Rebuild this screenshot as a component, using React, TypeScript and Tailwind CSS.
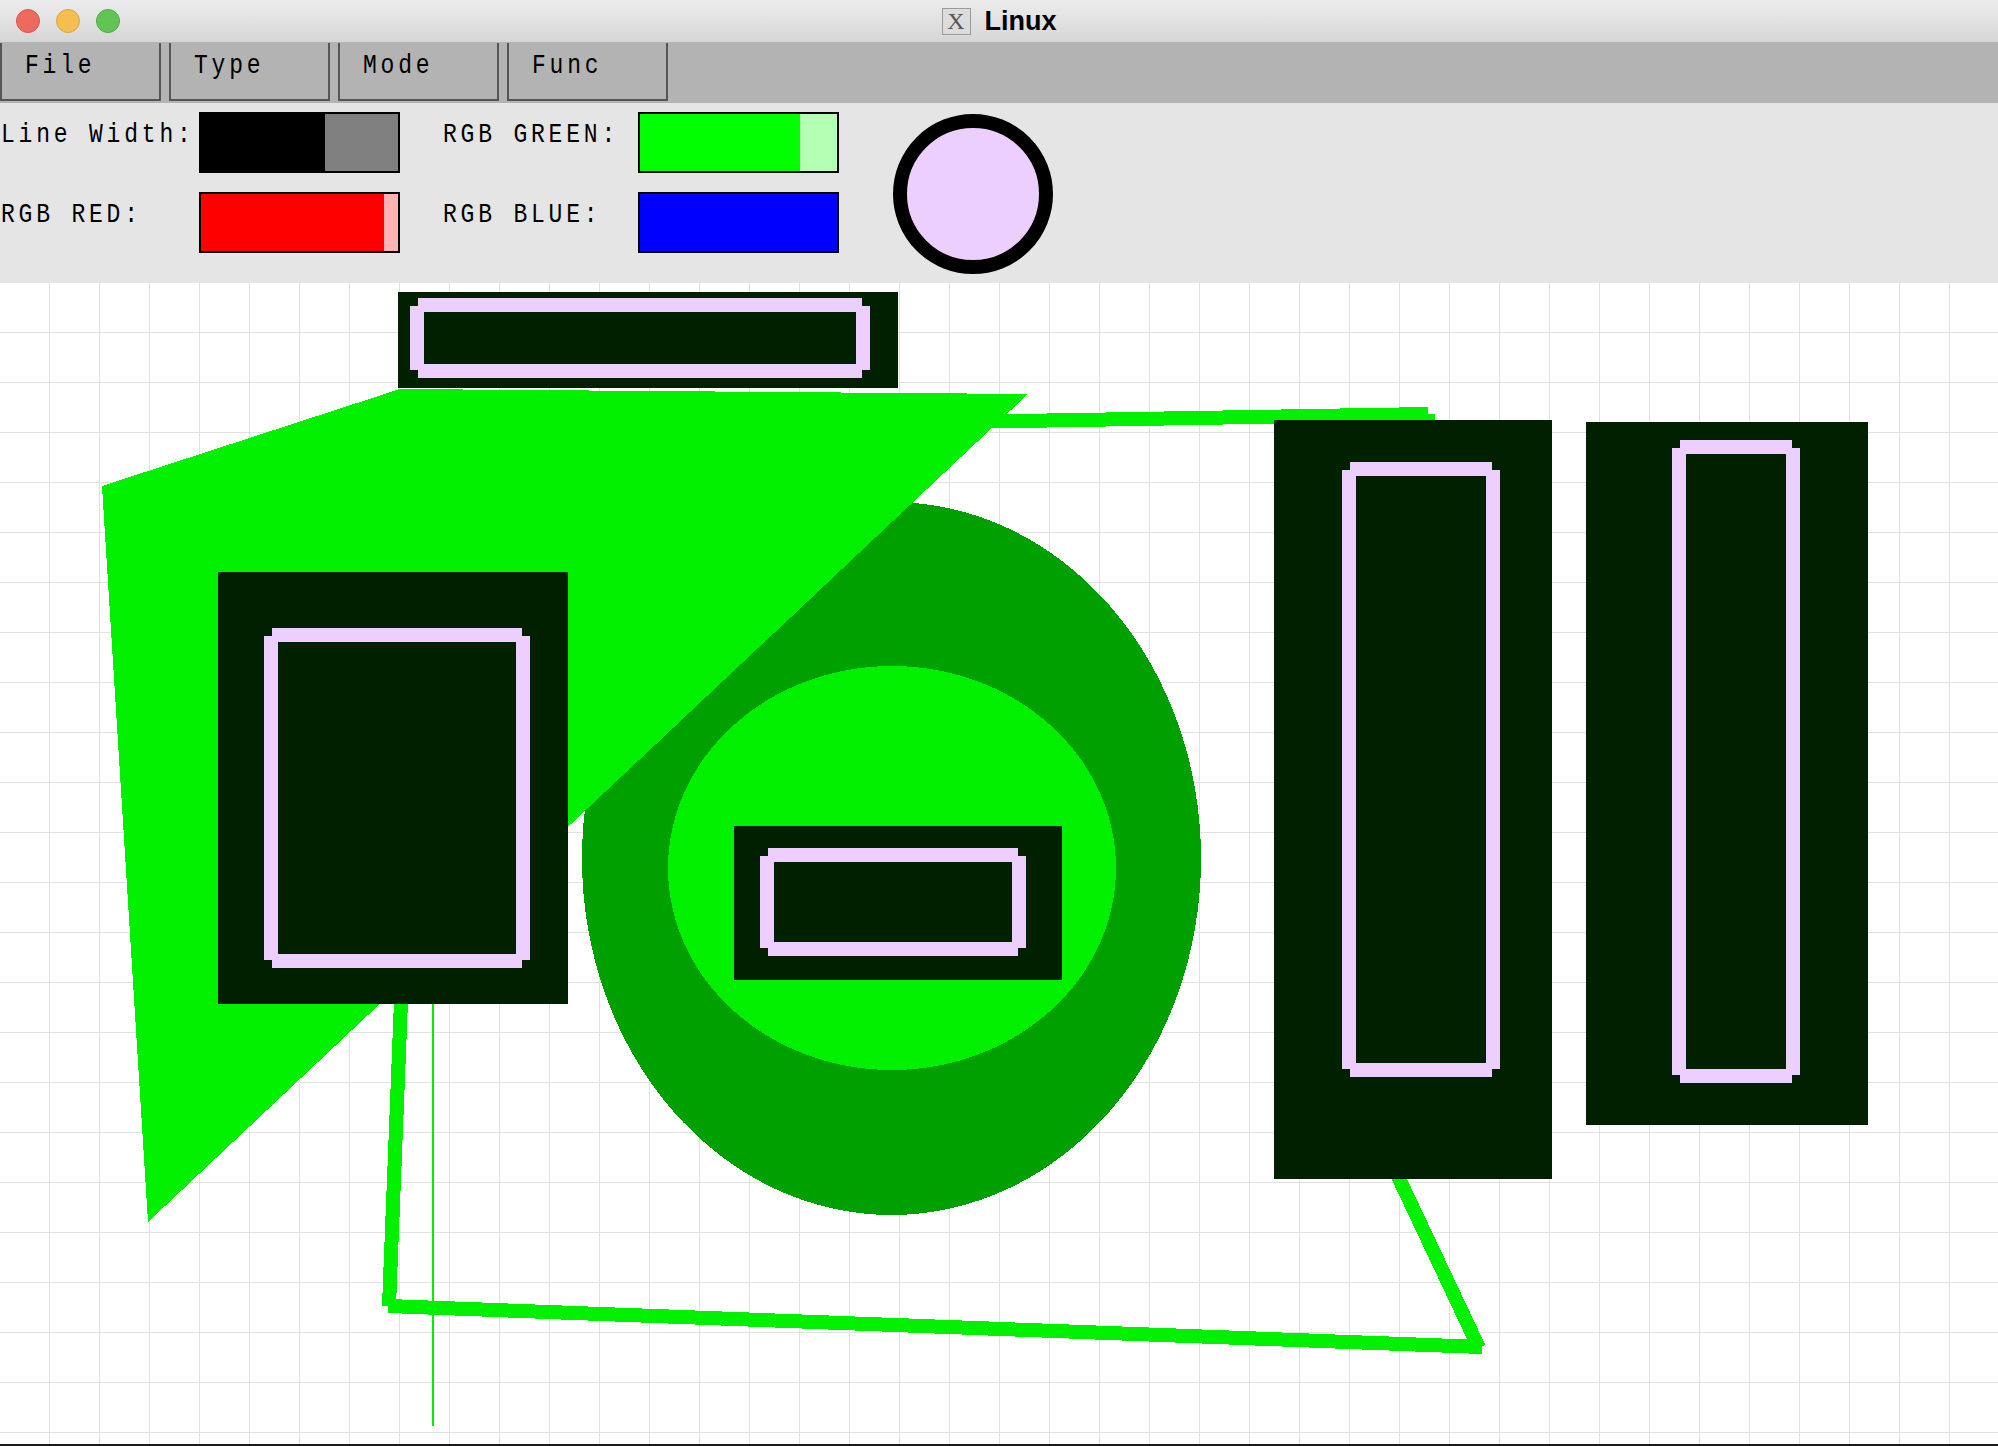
const LAV = "#edcfff";
const DARK = "#002000";
const GREEN = "#00f000";
const GREEN_DARK = "#00a000";

type Box = { x: number; y: number; w: number; h: number };

// lavender outline with the chipped corners that the X server draws
function LavFrame({ x, y, w, h }: Box) {
  const n = 8;
  const t = 14;
  const outer = `M${x + n} ${y}H${x + w - n}V${y + n}H${x + w}V${y + h - n}H${x + w - n}V${y + h}H${x + n}V${y + h - n}H${x}V${y + n}H${x + n}Z`;
  const inner = `M${x + t} ${y + t}V${y + h - t}H${x + w - t}V${y + t}Z`;
  return <path d={outer + inner} fill={LAV} fillRule="evenodd" />;
}

function Block({ outer, lav }: { outer: Box; lav: Box }) {
  return (
    <g>
      <rect x={outer.x} y={outer.y} width={outer.w} height={outer.h} fill={DARK} />
      <LavFrame {...lav} />
    </g>
  );
}

const blocks: { outer: Box; lav: Box }[] = [
  { outer: { x: 398, y: 292, w: 500, h: 96 }, lav: { x: 410, y: 298, w: 460, h: 80 } },
  { outer: { x: 218, y: 572, w: 350, h: 432 }, lav: { x: 264, y: 628, w: 266, h: 340 } },
  { outer: { x: 734, y: 826, w: 328, h: 154 }, lav: { x: 760, y: 848, w: 266, h: 108 } },
  { outer: { x: 1274, y: 420, w: 278, h: 759 }, lav: { x: 1342, y: 462, w: 158, h: 615 } },
  { outer: { x: 1586, y: 422, w: 282, h: 703 }, lav: { x: 1672, y: 440, w: 128, h: 643 } },
];

function Slider({ fill, rest, pct }: { fill: string; rest: string; pct: number }) {
  return (
    <div className="w-[201px] h-[61px] border-2 border-black flex">
      <div className="h-full" style={{ width: `${pct}%`, background: fill }} />
      <div className="h-full flex-1" style={{ background: rest }} />
    </div>
  );
}

// X "fixed" look: narrow glyphs, wide pitch, a bit taller
function Fixed({ children }: { children: React.ReactNode }) {
  return (
    <div className="origin-bottom scale-y-[1.22] leading-[27px] text-[23px] tracking-[3.8px] text-black whitespace-pre font-['Liberation_Mono',monospace]">
      {children}
    </div>
  );
}

function Label({ children }: { children: React.ReactNode }) {
  return (
    <div className="pt-[13px]">
      <Fixed>{children}</Fixed>
    </div>
  );
}

function Canvas() {
  return (
    <svg width="1998" height="1161" viewBox="0 283 1998 1161" shapeRendering="crispEdges" className="block">
      <defs>
        <pattern id="grid" x="0" y="283" width="50" height="50" patternUnits="userSpaceOnUse">
          <rect x="49" y="0" width="2" height="50" fill="#e1e1e1" />
          <rect x="0" y="49" width="50" height="2" fill="#e1e1e1" />
        </pattern>
      </defs>
      <rect x="0" y="283" width="1998" height="1161" fill="#fff" />
      <rect x="0" y="283" width="1998" height="1161" fill="url(#grid)" />

      {/* outline strokes */}
      <g stroke={GREEN} strokeWidth="14" strokeLinecap="butt" fill="none">
        <line x1="960" y1="422" x2="1428" y2="414" />
        <line x1="1428" y1="414" x2="1400" y2="1100" />
        <line x1="1395" y1="1170" x2="1479" y2="1348" />
        <line x1="388" y1="1306" x2="1482" y2="1347" />
        <line x1="403" y1="950" x2="389" y2="1306" />
      </g>
      <rect x="432" y="1004" width="2" height="422" fill={GREEN} />

      <ellipse cx="891.5" cy="858.5" rx="309.5" ry="356.5" fill={GREEN_DARK} />
      <polygon points="102,486 400,389 1028,394 148,1222" fill={GREEN} />
      <ellipse cx="892" cy="868" rx="224" ry="202" fill={GREEN} />

      {blocks.map((b, i) => (
        <Block key={i} outer={b.outer} lav={b.lav} />
      ))}
    </svg>
  );
}

export default function App() {
  const menus = ["File", "Type", "Mode", "Func"];
  return (
    <div className="w-[1998px] h-[1446px] flex flex-col bg-white overflow-hidden">
      {/* title bar */}
      <div className="h-[42px] grid grid-cols-[1fr_auto_1fr] items-center bg-linear-to-b from-[#ececec] to-[#d6d6d6]">
        <div className="flex items-center gap-[16px] pl-[16px]">
          <span className="w-[24px] h-[24px] rounded-full bg-[#ee6a5f] border border-[#d9574d]" />
          <span className="w-[24px] h-[24px] rounded-full bg-[#f5bf4f] border border-[#dba540]" />
          <span className="w-[24px] h-[24px] rounded-full bg-[#61c554] border border-[#50a846]" />
        </div>
        <div className="flex items-center gap-[14px]">
          <span className="w-[29px] h-[27px] border border-[#9a9a9a] bg-[#dcdcdc] flex items-center justify-center text-[24px] leading-none text-[#555] font-['Liberation_Serif',serif]">
            X
          </span>
          <span className="text-[27px] font-bold text-black font-['Liberation_Sans',sans-serif]">Linux</span>
        </div>
        <div />
      </div>

      {/* menu bar */}
      <div className="h-[61px] bg-[#b3b3b3] flex gap-[8px] pt-[1px]">
        {menus.map((m) => (
          <div
            key={m}
            className="w-[161px] h-[58px] border-2 border-t-0 border-[#555] bg-[#b3b3b3] pl-[23px] pt-[13px]"
          >
            <Fixed>{m}</Fixed>
          </div>
        ))}
      </div>

      {/* toolbar */}
      <div className="h-[180px] bg-[#e5e5e5] flex items-start pt-[9px] pl-[1px]">
        <div className="grid grid-cols-[198px_201px_238px_200px] gap-y-[19px]">
          <Label>Line Width:</Label>
          <Slider fill="#000" rest="#808080" pct={63} />
          <div className="pl-[43px]">
            <Label>RGB GREEN:</Label>
          </div>
          <Slider fill="#00ff00" rest="#b3ffb3" pct={81} />
          <Label>RGB RED:</Label>
          <Slider fill="#ff0000" rest="#ffb3b3" pct={93} />
          <div className="pl-[43px]">
            <Label>RGB BLUE:</Label>
          </div>
          <Slider fill="#0000ff" rest="#0000ff" pct={100} />
        </div>
        <svg width="160" height="160" viewBox="0 0 160 160" className="ml-[55px] mt-[2px]">
          <circle cx="80" cy="80" r="73" fill={LAV} stroke="#000" strokeWidth="14" />
        </svg>
      </div>

      <Canvas />
      <div className="h-[2px] bg-[#1a1a1a]" />
    </div>
  );
}
